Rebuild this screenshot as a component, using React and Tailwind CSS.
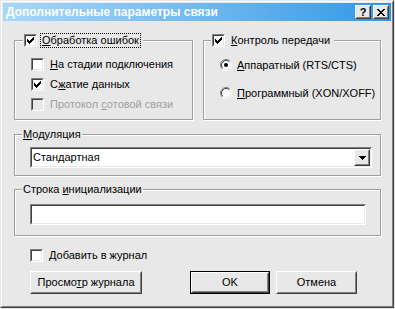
import React from 'react';

const CheckMark = () => (
  <svg width="7" height="7" viewBox="0 0 7 7" shapeRendering="crispEdges" className="m-[1px]">
    <path d="M0 2h1v3H0z M1 3h1v3H1z M2 4h1v3H2z M3 3h1v3H3z M4 2h1v3H4z M5 1h1v3H5z M6 0h1v3H6z" fill="#000" />
  </svg>
);

const Checkbox = ({ checked, disabled }) => (
  <span className="flex h-[13px] w-[13px] shrink-0 border border-t-[#808080] border-l-[#808080] border-r-white border-b-white">
    <span
      className={
        disabled
          ? 'flex h-full w-full border border-t-[#404040] border-l-[#404040] border-r-[#e8e8e8] border-b-[#e8e8e8] bg-[#e8e8e8]'
          : 'flex h-full w-full border border-t-[#404040] border-l-[#404040] border-r-[#e8e8e8] border-b-[#e8e8e8] bg-white'
      }
    >
      {checked && <CheckMark />}
    </span>
  </span>
);

const Radio = ({ checked }) => (
  <svg width="12" height="12" viewBox="0 0 12 12" className="shrink-0">
    <circle cx="6" cy="6" r="4.5" fill="#fff" />
    <path d="M2.11 9.89A5.5 5.5 0 0 1 9.89 2.11" stroke="#808080" fill="none" />
    <path d="M9.89 2.11A5.5 5.5 0 0 1 2.11 9.89" stroke="#fff" fill="none" />
    <path d="M2.82 9.18A4.5 4.5 0 0 1 9.18 2.82" stroke="#404040" fill="none" />
    <path d="M9.18 2.82A4.5 4.5 0 0 1 2.82 9.18" stroke="#e8e8e8" fill="none" />
    {checked && <circle cx="6" cy="6" r="2" fill="#000" />}
  </svg>
);

const U = ({ children }) => <span className="underline decoration-1 underline-offset-[1px]">{children}</span>;

const Raised = ({ className, children }) => (
  <div className={className}>
    <div className="flex h-full w-full border border-t-white border-l-white border-r-[#404040] border-b-[#404040] bg-[#e8e8e8]">
      <div className="flex h-full w-full items-center justify-center border border-t-[#e8e8e8] border-l-[#e8e8e8] border-r-[#808080] border-b-[#808080]">
        {children}
      </div>
    </div>
  </div>
);

const Sunken = ({ className, children }) => (
  <div className={className}>
    <div className="flex h-full w-full border border-t-[#808080] border-l-[#808080] border-r-white border-b-white">
      <div className="flex h-full w-full items-center border border-t-[#404040] border-l-[#404040] border-r-[#e8e8e8] border-b-[#e8e8e8] bg-white">
        {children}
      </div>
    </div>
  </div>
);

const groupCls =
  'min-w-0 border border-[#a0a0a0] shadow-[inset_1px_1px_0_#fff,1px_1px_0_#fff]';

export default function App() {
  return (
    <div className="h-[309px] w-[395px] bg-[#e8e8e8] font-['Liberation_Sans',Arial,sans-serif] text-[11px] leading-[13px] text-black">
      <div className="h-[308px] w-[394px] border border-t-[#e8e8e8] border-l-[#e8e8e8] border-r-[#404040] border-b-[#404040]">
        <div className="flex h-full w-full flex-col border border-t-white border-l-white border-r-[#808080] border-b-[#808080] p-[1px]">
          {/* title bar */}
          <div className="flex h-[18px] shrink-0 items-center bg-gradient-to-r from-[#a8d8f8] to-[#2b98e6] pl-[3px] pr-[2px]">
            <span className="flex-1 text-[12px] font-bold text-white">Дополнительные параметры связи</span>
            <Raised className="h-[14px] w-[16px]">
              <span className="text-[11px] font-bold leading-[10px]">?</span>
            </Raised>
            <Raised className="ml-[2px] h-[14px] w-[16px]">
              <svg width="8" height="7" viewBox="0 0 8 7" shapeRendering="crispEdges">
                <path d="M0 0h2v1H0z M6 0h2v1H6z M1 1h2v1H1z M5 1h2v1H5z M2 2h4v1H2z M3 3h2v1H3z M2 4h4v1H2z M1 5h2v1H1z M5 5h2v1H5z M0 6h2v1H0z M6 6h2v1H6z" fill="#000" />
              </svg>
            </Raised>
          </div>

          {/* body */}
          <div className="flex flex-col pl-[11px] pt-[12px]">
            <div className="flex gap-[10px]">
              <fieldset className={`${groupCls} h-[87px] w-[179px]`}>
                <legend className="ml-[8px] flex h-[15px] items-center bg-[#e8e8e8] pl-[1px] pr-[2px]">
                  <Checkbox checked />
                  <span className="ml-[3px] border border-dotted border-black px-[1px] leading-[13px]">
                    <U>О</U>бработка ошибок
                  </span>
                </legend>
                <div className="flex flex-col gap-[7px] pl-[16px] pt-[10px]">
                  <div className="flex h-[13px] items-center gap-[6px]">
                    <Checkbox />
                    <span><U>Н</U>а стадии подключения</span>
                  </div>
                  <div className="flex h-[13px] items-center gap-[6px]">
                    <Checkbox checked />
                    <span>С<U>ж</U>атие данных</span>
                  </div>
                  <div className="flex h-[13px] items-center gap-[6px]">
                    <Checkbox disabled />
                    <span className="text-[#a0a0a0]">Протокол <U>с</U>отовой связи</span>
                  </div>
                </div>
              </fieldset>

              <fieldset className={`${groupCls} h-[87px] w-[178px]`}>
                <legend className="ml-[7px] flex h-[15px] items-center bg-[#e8e8e8] pl-[1px] pr-[4px]">
                  <Checkbox checked />
                  <span className="ml-[6px]"><U>К</U>онтроль передачи</span>
                </legend>
                <div className="flex flex-col gap-[16px] pl-[16px] pt-[11px]">
                  <div className="flex h-[12px] items-center gap-[5px]">
                    <Radio checked />
                    <span><U>А</U>ппаратный (RTS/CTS)</span>
                  </div>
                  <div className="flex h-[12px] items-center gap-[5px]">
                    <Radio />
                    <span><U>П</U>рограммный (XON/XOFF)</span>
                  </div>
                </div>
              </fieldset>
            </div>

            <fieldset className={`${groupCls} mt-[8px] h-[48px] w-[367px]`}>
              <legend className="ml-[7px] h-[13px] bg-[#e8e8e8] px-[1px]">
                <U>М</U>одуляция
              </legend>
              <div className="pl-[15px] pt-[6px]">
                <Sunken className="h-[21px] w-[342px]">
                  <span className="flex-1 pl-[1px]">Стандартная</span>
                  <Raised className="h-full w-[16px]">
                    <svg width="7" height="4" viewBox="0 0 7 4" shapeRendering="crispEdges">
                      <path d="M0 0h7v1H0z M1 1h5v1H1z M2 2h3v1H2z M3 3h1v1H3z" fill="#000" />
                    </svg>
                  </Raised>
                </Sunken>
              </div>
            </fieldset>

            <fieldset className={`${groupCls} mt-[7px] h-[53px] w-[367px]`}>
              <legend className="ml-[7px] h-[13px] bg-[#e8e8e8] px-[1px]">
                Строка <U>и</U>нициализации
              </legend>
              <div className="pl-[15px] pt-[8px]">
                <Sunken className="h-[21px] w-[336px]" />
              </div>
            </fieldset>

            <div className="mt-[13px] flex h-[13px] items-center gap-[6px] pl-[16px]">
              <Checkbox />
              <span><U>Д</U>обавить в журнал</span>
            </div>

            <div className="mt-[9px] flex pl-[16px]">
              <Raised className="h-[23px] w-[112px]">
                <span>Просмо<U>т</U>р журнала</span>
              </Raised>
              <div className="ml-[48px] h-[23px] w-[80px] border border-black">
                <Raised className="h-full w-full">
                  <span>OK</span>
                </Raised>
              </div>
              <Raised className="ml-[6px] h-[23px] w-[81px]">
                <span>Отмена</span>
              </Raised>
            </div>
          </div>
        </div>
      </div>
    </div>
  );
}
